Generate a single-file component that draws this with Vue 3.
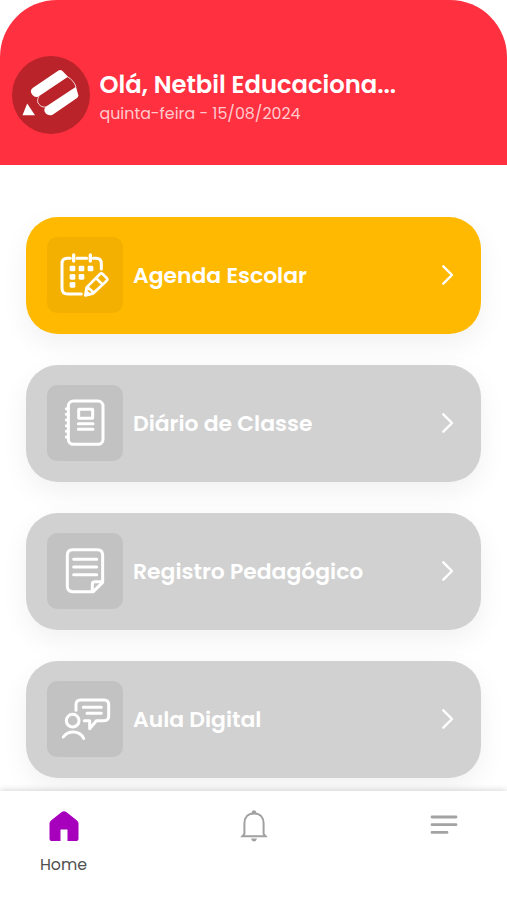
<script setup>
const cards = [
  { title: 'Agenda Escolar', icon: 'agenda' },
  { title: 'Diário de Classe', icon: 'diary' },
  { title: 'Registro Pedagógico', icon: 'record' },
  { title: 'Aula Digital', icon: 'lesson' },
]
</script>

<template>
  <div class="screen">
    <header class="header">
      <svg class="avatar" viewBox="0 0 78 78">
        <circle cx="39" cy="39" r="39" fill="#b92329" />
        <g fill="#fff">
          <path d="M46.5 14.6Q48.5 13.4 50.5 15L56 20.8L26.5 40.4Q23 42 20.5 39Q17 34.8 21 31.7Z" />
          <path d="M64 30.8L66.3 39.3Q66.4 41 65 42L41 58.4Q37 60.5 33.8 57.5Q30.5 53 34.5 50.2Z" />
          <path d="M15.2 47.5L23 59.3H10.5Z" />
        </g>
        <path d="M55.5 20.8Q62 24.5 64 31M27 40.4C23 46 28 52 34.5 51" fill="none" stroke="#fff" stroke-width=".8" />
      </svg>
      <div class="greeting">
        <h1>Olá, Netbil Educaciona...</h1>
        <p>quinta-feira - 15/08/2024</p>
      </div>
    </header>

    <main class="list">
      <article v-for="card in cards" :key="card.icon" class="card" :class="{ active: card.icon === 'agenda' }">
        <div class="tile">
          <svg v-if="card.icon === 'agenda'" viewBox="21 22 228 228">
            <path d="M91 86H82Q66 86 66 102V176Q66 193 83 193H124M111 86H140M160 86H168Q184 86 184 102V118" />
            <path d="M101 76V94M151 76V94" stroke-width="10" />
            <g class="solid">
              <rect x="89" y="108" width="17" height="17" rx="4" />
              <rect x="116" y="108" width="17" height="17" rx="4" />
              <rect x="143" y="108" width="17" height="17" rx="4" />
              <rect x="89" y="133" width="17" height="17" rx="4" />
              <rect x="116" y="133" width="17" height="17" rx="4" />
              <rect x="89" y="157" width="17" height="17" rx="4" />
            </g>
            <path d="M136 197L140 173L180 133Q184 129 188 133L200 145Q204 149 200 153L160 191ZM168 145L187 164M142 172L162 189" class="pencil" />
            <path d="M136 197L139 181L153 193Z" class="solid" />
          </svg>
          <svg v-else-if="card.icon === 'diary'" viewBox="21 16 228 228">
            <rect x="85" y="64" width="104" height="130" rx="15" />
            <rect x="116" y="89" width="42" height="27" rx="1" />
            <path d="M115 132H159M115 149H159" />
            <path d="M79 87H85M79 104H85M79 121H85M79 138H85M79 155H85M79 172H85" />
          </svg>
          <svg v-else-if="card.icon === 'record'" viewBox="21 16 228 228">
            <path d="M158 192H98Q82 192 82 176V82Q82 66 98 66H172Q188 66 188 82V164L160 192Z" />
            <path d="M157 191V170Q157 162 165 162H188M101 95H170M101 118H170M101 141H170" />
          </svg>
          <svg v-else viewBox="21 16 228 228">
            <circle cx="98" cy="135" r="19" />
            <path d="M70 184Q80 169 100 169Q121 169 131 188" />
            <path d="M108 104V87Q108 73 122 73H192Q206 73 206 87V121Q206 135 192 135H169L149 159V135H133" />
            <path d="M130 95H184M141 113H184" />
          </svg>
        </div>
        <h2>{{ card.title }}</h2>
        <svg class="chevron" viewBox="0 0 14 22"><path d="M2.3 2.3L11 11L2.3 19.7" /></svg>
      </article>
    </main>

    <nav class="tabs">
      <a class="tab home">
        <svg viewBox="0 0 30 30"><path d="M13 .8Q15 -.5 17 .8L28 9.5Q29.5 11 29.5 12.5V28Q29.5 30 27.5 30H18.5V18.5H11.5V30H2.5Q.5 30 .5 28V12.5Q.5 11 2 9.5Z" fill="#a600bc" /></svg>
        <span>Home</span>
      </a>
      <a class="tab bell">
        <svg viewBox="0 0 28 32" fill="none" stroke="#a1a1a1" stroke-width="2">
          <path d="M2.4 26.2H25.6L23.6 23.8V13.5C23.6 7.5 20.3 3.4 14 3.4C7.7 3.4 4.4 7.5 4.4 13.5V23.8Z" />
          <path d="M11.4 3.4Q12 .2 14 .2Q16 .2 16.6 3.4ZM11 28.6H17Q16.3 31.5 14 31.5Q11.7 31.5 11 28.6Z" fill="#a1a1a1" stroke="none" />
        </svg>
      </a>
      <a class="tab menu">
        <svg viewBox="0 0 28 20"><path d="M2 2H26M2 9.7H26M2 17.4H17" fill="none" stroke="#a3a3a3" stroke-width="2.8" stroke-linecap="round" /></svg>
      </a>
    </nav>
  </div>
</template>

<style>
body { background: #fff; }
</style>

<style scoped>
.screen {
  width: 507px;
  height: 900px;
  display: flex;
  flex-direction: column;
  overflow: hidden;
  background: #fff;
  font-family: Poppins, Inter, "Liberation Sans", sans-serif;
  font-feature-settings: "cv11" 1;
}
h1, h2, p { margin: 0; white-space: nowrap; }
.header {
  box-sizing: border-box;
  height: 165px;
  flex: none;
  display: flex;
  align-items: flex-start;
  gap: 10px;
  padding: 56px 11.5px 0;
  background: #ff3040;
  border-radius: 57px 57px 0 0;
  color: #fff;
}
.avatar { width: 78px; height: 78px; flex: none; }
.greeting { padding-top: 13px; }
h1 { font-size: 24.25px; line-height: 31px; font-weight: 600; }
p { font-size: 15.85px; line-height: 27px; color: #ffc9cd; }
.list {
  flex: 1;
  min-height: 0;
  overflow: hidden;
  display: flex;
  flex-direction: column;
  gap: 31.5px;
  padding: 52px 26px 0;
}
.card {
  box-sizing: border-box;
  height: 116.5px;
  flex: none;
  display: flex;
  align-items: center;
  padding: 0 26px 0 21px;
  background: #d1d1d1;
  border-radius: 32px;
  box-shadow: 0 10px 28px rgba(0, 0, 0, 0.06);
  color: #fff;
}
.card.active { background: #ffb900; }
.tile {
  width: 76px;
  height: 76px;
  flex: none;
  border-radius: 10px;
  background: #c2c2c2;
}
.active .tile { background: #f4b000; }
.tile svg {
  display: block;
  width: 76px;
  height: 76px;
  fill: none;
  stroke: #fff;
  stroke-width: 9;
  stroke-linecap: round;
  stroke-linejoin: round;
}
.tile .solid { fill: #fff; stroke: none; }
.tile .pencil { stroke-width: 8; }
h2 { flex: 1; padding: 1px 0 0 10px; font-size: 21.9px; line-height: 32px; font-weight: 600; }
.chevron {
  width: 14px;
  height: 22px;
  fill: none;
  stroke: #fff;
  stroke-width: 2.4;
  stroke-linecap: round;
  stroke-linejoin: round;
}
.tabs {
  height: 109px;
  flex: none;
  display: flex;
  justify-content: space-between;
  padding: 0 33.5px;
  background: #fff;
  box-shadow: 0 -1px 6px rgba(0, 0, 0, 0.16);
  position: relative;
}
.tab { width: 60px; display: flex; flex-direction: column; align-items: center; }
.home svg { width: 30px; height: 30px; margin-top: 20px; }
.home span { margin-top: 12px; font-size: 15.8px; line-height: 24px; color: #505050; }
.bell svg { width: 28px; height: 32px; margin-top: 19px; }
.menu svg { width: 28px; height: 20px; margin-top: 24px; }
</style>
